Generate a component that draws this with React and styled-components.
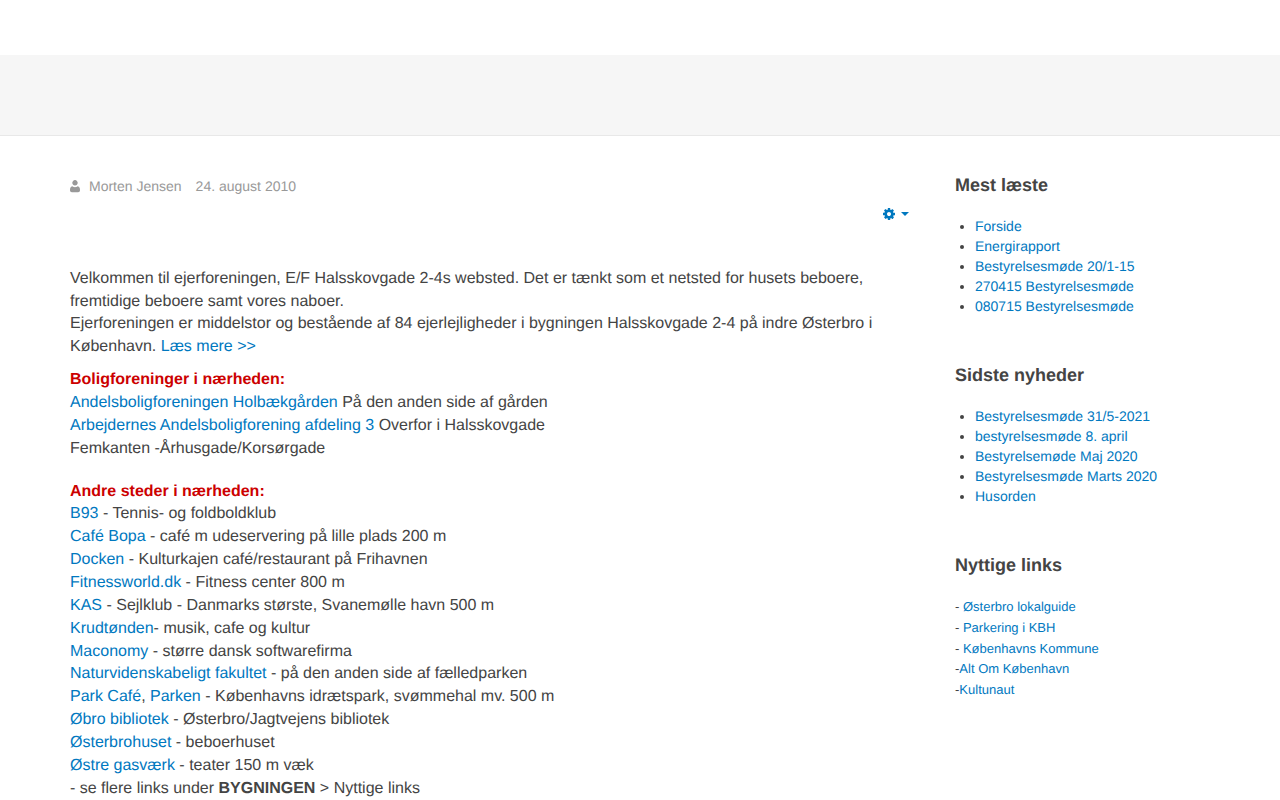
import styled, { createGlobalStyle } from 'styled-components';

const GlobalStyle = createGlobalStyle`
html, body {
    margin: 0;
    padding: 0;
    background: white;
    overflow: hidden;
}
body {
    font-family: "Liberation Sans", Arial, sans-serif;
    color: #444;
    text-rendering: geometricPrecision;
}
* { box-sizing: border-box; }
`
const Page = styled.div`
width: 1280px;
height: 800px;
overflow: hidden;
`
const TopBar = styled.div`
height: 55px;
background: white;
`
const Band = styled.div`
height: 81px;
background: #f6f6f6;
border-bottom: 1px solid #e8e8e8;
`
const Columns = styled.div`
display: flex;
padding: 0 70px;
`
const Main = styled.div`
width: 885px;
padding-right: 45px;
padding-top: 40px;
font-size: 16px;
line-height: 22.86px;
`
const Meta = styled.div`
display: flex;
align-items: center;
height: 20px;
font-size: 14px;
color: #999;
span { margin-right: 14px; }
`
const UserIcon = styled.svg`
width: 10px;
height: 13px;
margin-right: 9px;
fill: #999;
`
const ToolRow = styled.div`
display: flex;
justify-content: flex-end;
align-items: center;
height: 20px;
margin-top: 8px;
margin-bottom: 43.7px;
padding-right: 1px;
`
const CogIcon = styled.svg`
width: 14px;
height: 14px;
fill: #0078bf;
`
const Caret = styled.i`
display: inline-block;
margin-left: 5px;
border-top: 4px solid #0078bf;
border-left: 4px solid transparent;
border-right: 4px solid transparent;
`
const Para = styled.p`
margin: 0 0 ${props => props.$gap || 0}px;
`
const Red = styled.strong`
color: #cc0000;
`
const A = styled.a`
color: #0078bf;
text-decoration: none;
`
const Side = styled.div`
width: 255px;
padding-top: 36px;
`
const SideTitle = styled.h3`
margin: 0 0 ${props => props.$gap || 18}px;
font-size: 18px;
line-height: 26px;
font-weight: 700;
color: #444;
`
const SideList = styled.ul`
margin: 0 0 46px;
padding: 0 0 0 20px;
font-size: 14px;
line-height: 20px;
`
const SmallLine = styled.div`
font-size: 13px;
line-height: 20.75px;
`

const nearby = [
    [<A href="#">B93</A>, ' - Tennis- og foldboldklub'],
    [<A href="#">Café Bopa</A>, ' - café m udeservering på lille plads 200 m'],
    [<A href="#">Docken</A>, ' - Kulturkajen café/restaurant på Frihavnen'],
    [<A href="#">Fitnessworld.dk</A>, ' - Fitness center 800 m'],
    [<A href="#">KAS</A>, ' - Sejlklub - Danmarks største, Svanemølle havn 500 m'],
    [<A href="#">Krudtønden</A>, '- musik, cafe og kultur'],
    [<A href="#">Maconomy</A>, ' - større dansk softwarefirma'],
    [<A href="#">Naturvidenskabeligt fakultet</A>, ' - på den anden side af fælledparken'],
    [<A href="#">Park Café</A>, ', ', <A href="#">Parken</A>, ' - Københavns idrætspark, svømmehal mv. 500 m'],
    [<A href="#">Øbro bibliotek</A>, ' - Østerbro/Jagtvejens bibliotek'],
    [<A href="#">Østerbrohuset</A>, ' - beboerhuset'],
    [<A href="#">Østre gasværk</A>, ' - teater 150 m væk'],
    ['- se flere links under ', <strong>BYGNINGEN</strong>, ' > Nyttige links'],
];

const mostRead = ['Forside', 'Energirapport', 'Bestyrelsesmøde 20/1-15', '270415 Bestyrelsesmøde', '080715 Bestyrelsesmøde'];
const latest = ['Bestyrelsesmøde 31/5-2021', 'bestyrelsesmøde 8. april', 'Bestyrelsemøde Maj 2020', 'Bestyrelsesmøde Marts 2020', 'Husorden'];
const usefulLinks = [
    ['- ', 'Østerbro lokalguide'],
    ['- ', 'Parkering i KBH'],
    ['- ', 'Københavns Kommune'],
    ['-', 'Alt Om København'],
    ['-', 'Kultunaut'],
];

function App() {
    return (
        <Page>
            <GlobalStyle />
            <TopBar />
            <Band />
            <Columns>
                <Main>
                    <Meta>
                        <UserIcon viewBox="0 0 1408 1792">
                            <path d="M1408 1438q0 120-73 189.5t-194 69.5h-874q-121 0-194-69.5t-73-189.5q0-53 3.5-103.5t14-109 26.5-108.5 43-97.5 62-81 85.5-53.5 111.5-20q9 0 42 21.5t74.5 48 108 48 133.5 21.5 133.5-21.5 108-48 74.5-48 42-21.5q61 0 111.5 20t85.5 53.5 62 81 43 97.5 26.5 108.5 14 109 3.5 103.5zm-320-1056q0 159-112.5 271.5t-271.5 112.5-271.5-112.5-112.5-271.5 112.5-271.5 271.5-112.5 271.5 112.5 112.5 271.5z" />
                        </UserIcon>
                        <span>Morten Jensen</span>
                        <span>24. august 2010</span>
                    </Meta>
                    <ToolRow>
                        <CogIcon viewBox="0 0 1792 1792">
                            <path d="M1152 896q0-106-75-181t-181-75-181 75-75 181 75 181 181 75 181-75 75-181zm512-109v222q0 12-8 23t-20 13l-185 28q-19 54-39 91 35 50 107 138 10 12 10 25t-9 23q-27 37-99 108t-94 71q-12 0-26-9l-138-108q-44 23-91 38-16 136-29 186-7 28-36 28h-222q-14 0-24.5-8.5t-11.5-21.5l-28-184q-49-16-90-37l-141 107q-10 9-25 9-14 0-25-11-126-114-165-168-7-10-7-23 0-12 8-23 15-21 51-66.5t54-70.5q-27-50-41-99l-183-27q-13-2-21-12.5t-8-23.5v-222q0-12 8-23t19-13l186-28q14-46 39-92-40-57-107-138-10-12-10-24 0-10 9-23 26-36 98.5-107.5t94.5-71.5q13 0 26 10l138 107q44-23 91-38 16-136 29-186 7-28 36-28h222q14 0 24.5 8.5t11.5 21.5l28 184q49 16 90 37l142-107q9-9 24-9 13 0 25 10 129 119 165 170 7 8 7 22 0 12-8 23-15 21-51 66.5t-54 70.5q26 50 41 98l183 28q13 2 21 12.5t8 23.5z" />
                        </CogIcon>
                        <Caret />
                    </ToolRow>
                    <Para $gap={10}>
                        Velkommen til ejerforeningen, E/F Halsskovgade 2-4s websted. Det er tænkt som et netsted for husets beboere, fremtidige beboere samt vores naboer.<br />
                        Ejerforeningen er middelstor og bestående af 84 ejerlejligheder i bygningen Halsskovgade 2-4 på indre Østerbro i København. <A href="#">Læs mere &gt;&gt;</A>
                    </Para>
                    <Para $gap={20}>
                        <Red>Boligforeninger i nærheden:</Red><br />
                        <A href="#">Andelsboligforeningen Holbækgården</A> På den anden side af gården<br />
                        <A href="#">Arbejdernes Andelsboligforening afdeling 3</A> Overfor i Halsskovgade<br />
                        Femkanten -Århusgade/Korsørgade
                    </Para>
                    <Para as="div">
                        <Red>Andre steder i nærheden:</Red>
                        {nearby.map((line, index) => <div key={index}>{line.map((part, i) => <span key={i}>{part}</span>)}</div>)}
                    </Para>
                </Main>
                <Side>
                    <SideTitle>Mest læste</SideTitle>
                    <SideList>
                        {mostRead.map((value) => <li key={value}><A href="#">{value}</A></li>)}
                    </SideList>
                    <SideTitle>Sidste nyheder</SideTitle>
                    <SideList>
                        {latest.map((value) => <li key={value}><A href="#">{value}</A></li>)}
                    </SideList>
                    <SideTitle $gap={19}>Nyttige links</SideTitle>
                    {usefulLinks.map((value) => <SmallLine key={value[1]}>{value[0]}<A href="#">{value[1]}</A></SmallLine>)}
                </Side>
            </Columns>
        </Page>
    );
}

export default App;
